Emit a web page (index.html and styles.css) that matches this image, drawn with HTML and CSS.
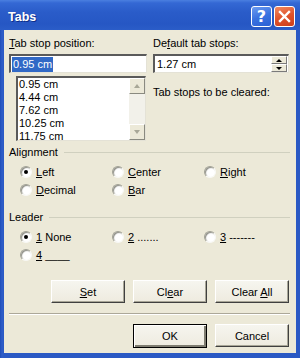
FILE: index.html
```html
<!DOCTYPE html>
<html>
<head>
<meta charset="utf-8">
<link rel="stylesheet" href="styles.css">
</head>
<body>
<div class="window">
  <div class="titlebar">
    <span class="title">Tabs</span>
    <div class="tb-buttons">
      <span class="tb-btn help">?</span>
      <span class="tb-btn close"><svg width="13" height="13" viewBox="0 0 13 13"><path d="M2 2 L11 11 M11 2 L2 11" stroke="#fff" stroke-width="2.4" stroke-linecap="square"/></svg></span>
    </div>
  </div>
  <div class="client">
    <div class="top">
      <div class="col">
        <div class="lbl"><u>T</u>ab stop position:</div>
        <div class="input"><span class="sel">0.95 cm</span></div>
        <div class="listbox">
          <ul class="items">
            <li>0.95 cm</li>
            <li>4.44 cm</li>
            <li>7.62 cm</li>
            <li>10.25 cm</li>
            <li>11.75 cm</li>
          </ul>
          <div class="vscroll">
            <span class="sb-btn"><span class="arr up"></span></span>
            <span class="sb-track"></span>
            <span class="sb-btn"><span class="arr down"></span></span>
          </div>
        </div>
      </div>
      <div class="col">
        <div class="lbl">De<u>f</u>ault tab stops:</div>
        <div class="input spin">
          <span class="val">1.27 cm</span>
          <div class="spinner">
            <span class="sp"><span class="arr up small"></span></span>
            <span class="sp"><span class="arr down small"></span></span>
          </div>
        </div>
        <div class="lbl cleared">Tab stops to be cleared:</div>
      </div>
    </div>

    <div class="group">
      <div class="group-title"><span>Alignment</span></div>
      <div class="radios">
        <label class="radio"><span class="dot checked"></span><span><u>L</u>eft</span></label>
        <label class="radio"><span class="dot"></span><span><u>C</u>enter</span></label>
        <label class="radio"><span class="dot"></span><span><u>R</u>ight</span></label>
        <label class="radio"><span class="dot"></span><span><u>D</u>ecimal</span></label>
        <label class="radio"><span class="dot"></span><span><u>B</u>ar</span></label>
      </div>
    </div>

    <div class="group leader">
      <div class="group-title"><span>Leader</span></div>
      <div class="radios">
        <label class="radio"><span class="dot checked"></span><span><u>1</u> None</span></label>
        <label class="radio"><span class="dot"></span><span><u>2</u> .......</span></label>
        <label class="radio"><span class="dot"></span><span><u>3</u> -------</span></label>
        <label class="radio"><span class="dot"></span><span><u>4</u> ____</span></label>
      </div>
    </div>

    <div class="btn-row actions">
      <button class="btn"><u>S</u>et</button>
      <button class="btn">Cl<u>e</u>ar</button>
      <button class="btn">Clear <u>A</u>ll</button>
    </div>

    <div class="separator"></div>

    <div class="btn-row">
      <button class="btn default">OK</button>
      <button class="btn">Cancel</button>
    </div>
  </div>
</div>
</body>
</html>
```

FILE: styles.css
```css
* { box-sizing: border-box; }

html, body {
  margin: 0;
  padding: 0;
  background: #ECE9D8;
}

body {
  font-family: "Liberation Sans", Arial, sans-serif;
  font-size: 11px;
  color: #000;
}

.window {
  width: 300px;
  height: 358px;
  display: flex;
  flex-direction: column;
  background: linear-gradient(90deg, #1F4DB8 0, #2E5DC8 2px, #2A59C4 4px);
}

.titlebar {
  height: 30px;
  flex: none;
  display: flex;
  align-items: center;
  justify-content: space-between;
  padding: 0 5px 0 8px;
  background: linear-gradient(180deg, #4A7FE0 0, #3468D4 3px, #2A5CC9 12px, #2657C4 24px, #2B5DC8 30px);
}

.title {
  color: #fff;
  font-weight: bold;
  font-size: 12.5px;
  text-shadow: 1px 1px 0 #0F2F8A;
  padding-top: 3px;
}

.tb-buttons {
  display: flex;
  gap: 2px;
  padding-top: 3px;
}

.tb-btn {
  width: 21px;
  height: 21px;
  border: 1px solid #fff;
  border-radius: 3px;
  display: flex;
  align-items: center;
  justify-content: center;
}

.help {
  background: linear-gradient(160deg, #6C9BF0 0, #3A72E0 50%, #2A5FD4 100%);
  color: #fff;
  font-weight: bold;
  font-size: 16px;
  font-family: "DejaVu Sans", sans-serif;
}

.close {
  background: linear-gradient(160deg, #F08A62 0, #E0532C 50%, #CC3E1A 100%);
}

.client {
  flex: 1;
  margin: 0 4px 5px 4px;
  background: #ECE9D8;
  padding: 7px 6px 5px 5px;
  display: flex;
  flex-direction: column;
}

.top {
  display: grid;
  grid-template-columns: 138px 136px;
  column-gap: 6px;
}

.col {
  display: flex;
  flex-direction: column;
}

.lbl {
  line-height: 13px;
  height: 13px;
  white-space: nowrap;
}

.input {
  margin-top: 4px;
  height: 19px;
  background: #fff;
  border-style: solid;
  border-width: 2px 1px 1px 2px;
  border-color: #5A5A5A #E4E2D6 #E4E2D6 #5A5A5A;
  padding: 0 1px;
  display: flex;
  align-items: center;
  line-height: 15px;
}

.sel {
  background: #3169C6;
  color: #fff;
  padding: 0 1px;
}

.spin .val {
  flex: 1;
  padding-left: 1px;
}

.spinner {
  width: 16px;
  height: 16px;
  display: flex;
  flex-direction: column;
}

.sp {
  flex: 1;
  background: #ECE9D8;
  border-style: solid;
  border-width: 1px;
  border-color: #fff #7A7A7A #7A7A7A #fff;
  display: flex;
  align-items: center;
  justify-content: center;
}

.arr {
  width: 0;
  height: 0;
  border-left: 3.5px solid transparent;
  border-right: 3.5px solid transparent;
}

.arr.up { border-bottom: 4px solid #000; }
.arr.down { border-top: 4px solid #000; }
.arr.up.small { border-bottom-width: 3px; }
.arr.down.small { border-top-width: 3px; }

.sb-btn .arr.up { border-bottom-color: #A8A797; }
.sb-btn .arr.down { border-top-color: #A8A797; }

.listbox {
  margin: 3px 0 0 7px;
  width: 130px;
  height: 65px;
  background: #fff;
  border-style: solid;
  border-width: 2px 1px 1px 2px;
  border-color: #5A5A5A #E4E2D6 #E4E2D6 #5A5A5A;
  display: flex;
}

.items {
  list-style: none;
  margin: 0;
  padding: 0 0 0 1px;
  flex: 1;
  line-height: 13px;
}

.vscroll {
  width: 16px;
  display: flex;
  flex-direction: column;
  background: #F2F1EA;
}

.sb-btn {
  height: 16px;
  background: #ECE9D8;
  border-style: solid;
  border-width: 1px;
  border-color: #fff #8A8A80 #8A8A80 #fff;
  display: flex;
  align-items: center;
  justify-content: center;
}

.sb-track { flex: 1; }

.cleared {
  margin-top: 13px;
}

.group {
  margin-top: 5px;
}

.group.leader {
  margin-top: 12px;
}

.group-title {
  display: flex;
  align-items: center;
  line-height: 13px;
  height: 13px;
}

.group-title::after {
  content: "";
  flex: 1;
  margin-left: 6px;
  border-top: 1px solid #D0D0BF;
}

.radios {
  margin-top: 4px;
  padding-left: 11px;
  display: grid;
  grid-template-columns: 92px 92px 92px;
  grid-auto-rows: 18px;
}

.radio {
  display: flex;
  align-items: center;
  gap: 4px;
  white-space: nowrap;
}

.dot {
  width: 12px;
  height: 12px;
  border-radius: 50%;
  background: #fff;
  box-shadow: inset 1px 1px 1px #8C8C84, inset -1px -1px 0 #fff;
  border: 1px solid;
  border-color: #A0A094 #F8F8F4 #F8F8F4 #A0A094;
  display: flex;
  align-items: center;
  justify-content: center;
}

.dot.checked::after {
  content: "";
  width: 4px;
  height: 4px;
  border-radius: 50%;
  background: #000;
}

.btn-row {
  display: flex;
  justify-content: flex-end;
  gap: 8px;
  margin-right: 1px;
}

.actions {
  margin-top: 16px;
}

.btn {
  width: 74px;
  height: 23px;
  font-family: "Liberation Sans", Arial, sans-serif;
  font-size: 11px;
  color: #000;
  background: linear-gradient(180deg, #F6F5EF 0, #EEEBDF 100%);
  border-style: solid;
  border-width: 1px;
  border-color: #fff #404040 #404040 #fff;
  box-shadow: inset -1px -1px 0 #A8A697;
  padding: 0;
}

.btn.default {
  height: 24px;
  border: 1px solid #000;
  box-shadow: inset 1px 1px 0 #fff, inset -2px -2px 0 #7E7C70;
}

.separator {
  margin-top: 10px;
  height: 2px;
  border-top: 1px solid #ACA899;
  border-bottom: 1px solid #fff;
  margin-bottom: 9px;
}
```
